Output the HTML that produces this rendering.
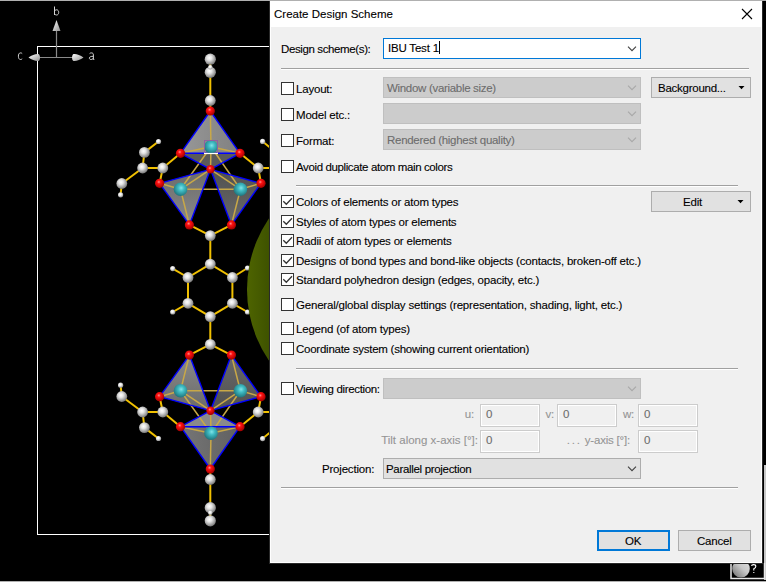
<!DOCTYPE html>
<html><head><meta charset="utf-8">
<style>
*{margin:0;padding:0;box-sizing:border-box}
html,body{width:766px;height:582px;overflow:hidden;background:#000}
body{position:relative;font-family:"Liberation Sans",sans-serif;font-size:11.5px;letter-spacing:-0.2px;color:#000;-webkit-text-stroke:0.1px currentColor}
.a{position:absolute}
.t{position:absolute;white-space:nowrap;line-height:14px;height:14px}
.dis{color:#6d6d6d}
.lab{color:#959595}
.cb{position:absolute;width:13px;height:13px;border:1px solid #333;background:#fff}
.sep{position:absolute;height:2px;border-top:1px solid #a0a0a0;border-bottom:1px solid #fff}
.combo{position:absolute;width:258px;height:21px;background:#ccc;border:1px solid #bfbfbf}
.btn{position:absolute;background:#e1e1e1;border:1px solid #adadad}
.fld{position:absolute;width:60px;height:23px;border:1px solid #ccc;background:#f0f0f0;box-shadow:inset 0 0 0 1px #fff}
</style></head>
<body>
<div class="a" style="left:0;top:0;width:766px;height:1px;background:#b0b0b0"></div>
<div class="a" style="left:0;top:581px;width:766px;height:1px;background:#b0b0b0"></div>
<div class="a" style="left:764px;top:465px;width:2px;height:115px;background:#c8c8c8"></div>

<svg id="mol" class="a" style="left:0;top:0" width="270" height="582"><defs>
<radialGradient id="gC" cx="0.42" cy="0.38" r="0.62"><stop offset="0" stop-color="#ffffff"/><stop offset="0.35" stop-color="#e4e4e4"/><stop offset="1" stop-color="#7a7a7a"/></radialGradient>
<radialGradient id="gH" cx="0.42" cy="0.38" r="0.62"><stop offset="0" stop-color="#ffffff"/><stop offset="0.4" stop-color="#eeeeee"/><stop offset="1" stop-color="#909090"/></radialGradient>
<radialGradient id="gO" cx="0.42" cy="0.36" r="0.64"><stop offset="0" stop-color="#ff9090"/><stop offset="0.3" stop-color="#ff1010"/><stop offset="1" stop-color="#a00000"/></radialGradient>
<radialGradient id="gZ" cx="0.55" cy="0.4" r="0.62"><stop offset="0" stop-color="#80e4e8"/><stop offset="0.35" stop-color="#40bcc4"/><stop offset="1" stop-color="#1c7078"/></radialGradient>
<linearGradient id="gGreen" gradientUnits="userSpaceOnUse" x1="247" y1="0" x2="270" y2="0"><stop offset="0" stop-color="#4e6400"/><stop offset="1" stop-color="#3e5200"/></linearGradient>
<linearGradient id="fTop" x1="0" y1="0" x2="1" y2="0"><stop offset="0" stop-color="#989898"/><stop offset="1" stop-color="#808080"/></linearGradient>
<linearGradient id="fL" x1="0" y1="0" x2="0" y2="1"><stop offset="0" stop-color="#6a6a6a"/><stop offset="1" stop-color="#8a8a8a"/></linearGradient>
<linearGradient id="fR" x1="0" y1="0" x2="0" y2="1"><stop offset="0" stop-color="#505050"/><stop offset="1" stop-color="#6a6a6a"/></linearGradient>
<linearGradient id="gAx" x1="0" y1="0" x2="1" y2="1"><stop offset="0" stop-color="#ffffff"/><stop offset="1" stop-color="#909090"/></linearGradient>
<linearGradient id="fBot" x1="0" y1="0" x2="1" y2="0"><stop offset="0" stop-color="#767676"/><stop offset="1" stop-color="#606060"/></linearGradient>
<linearGradient id="fL2" x1="0" y1="1" x2="0" y2="0"><stop offset="0" stop-color="#6a6a6a"/><stop offset="1" stop-color="#8a8a8a"/></linearGradient>
<linearGradient id="fR2" x1="0" y1="1" x2="0" y2="0"><stop offset="0" stop-color="#505050"/><stop offset="1" stop-color="#6a6a6a"/></linearGradient>
</defs><g>
<rect x="37.5" y="46.5" width="240" height="488" fill="none" stroke="#fff" stroke-width="1"/>
<line x1="56.5" y1="30" x2="56.5" y2="57.5" stroke="#8a8a8a" stroke-width="1.2"/>
<line x1="29" y1="57.5" x2="83" y2="57.5" stroke="#8a8a8a" stroke-width="1.2"/>
<path d="M56.5 20L60.5 31L52.5 31Z" fill="url(#gAx)"/>
<path d="M83.5 57.5C80 55 76 53.5 73.5 54C71.5 55 71.5 60 73.5 61C76 61.5 80 60 83.5 57.5Z" fill="url(#gAx)"/>
<path d="M28.5 57.5C32 55 36 53.5 38.5 54C40.5 55 40.5 60 38.5 61C36 61.5 32 60 28.5 57.5Z" fill="url(#gAx)"/>
<path d="M54.5 6.5V15M54.5 11.3C55 10.2 55.8 9.8 56.6 9.8C57.9 9.8 58.7 10.9 58.7 12.4C58.7 13.9 57.9 15 56.6 15C55.8 15 55 14.6 54.5 13.6" fill="none" stroke="#d4d4d4" stroke-width="1"/>
<path d="M22.2 53.6C21.8 53.1 21.2 52.9 20.5 52.9C19 52.9 18.4 54.4 18.4 56.2C18.4 58 19 59.5 20.5 59.5C21.2 59.5 21.8 59.2 22.2 58.8" fill="none" stroke="#d4d4d4" stroke-width="1"/>
<path d="M89.6 53.6C90 53.1 90.7 52.9 91.4 52.9C92.8 52.9 93.4 53.6 93.4 54.9V59.5M93.4 56.3C91.2 56.3 89.4 56.6 89.4 58.1C89.4 59 90 59.5 91 59.5C92.1 59.5 93 58.9 93.4 58M93.4 59.5H94.3" fill="none" stroke="#d4d4d4" stroke-width="1"/>
</g><line x1="158.5" y1="141.5" x2="144.4" y2="152.4" stroke="#f0c000" stroke-width="2"/>
<line x1="144.4" y1="152.4" x2="142.6" y2="168.0" stroke="#f0c000" stroke-width="2"/>
<line x1="142.6" y1="168.0" x2="162.8" y2="168.0" stroke="#f0c000" stroke-width="2"/>
<line x1="142.6" y1="168.0" x2="121.8" y2="183.5" stroke="#f0c000" stroke-width="2"/>
<line x1="121.8" y1="183.5" x2="120.6" y2="194.8" stroke="#f0c000" stroke-width="2"/>
<line x1="162.8" y1="168.0" x2="180.5" y2="153.3" stroke="#f0c000" stroke-width="2"/>
<line x1="162.8" y1="168.0" x2="159.6" y2="183.3" stroke="#f0c000" stroke-width="2"/>
<line x1="258.2" y1="168.0" x2="240.0" y2="153.3" stroke="#f0c000" stroke-width="2"/>
<line x1="258.2" y1="168.0" x2="261.0" y2="183.3" stroke="#f0c000" stroke-width="2"/>
<line x1="210.3" y1="111.0" x2="210.3" y2="100.5" stroke="#f0c000" stroke-width="2"/>
<line x1="210.3" y1="100.5" x2="210.3" y2="72.3" stroke="#f0c000" stroke-width="2"/>
<line x1="210.3" y1="72.3" x2="210.3" y2="59.2" stroke="#f0c000" stroke-width="2"/>
<line x1="189.4" y1="224.9" x2="210.3" y2="235.6" stroke="#f0c000" stroke-width="2"/>
<line x1="231.4" y1="224.9" x2="210.3" y2="235.6" stroke="#f0c000" stroke-width="2"/>
<line x1="262.6" y1="141.4" x2="270.0" y2="147.5" stroke="#f0c000" stroke-width="2"/>
<line x1="258.2" y1="168.0" x2="270.0" y2="168.0" stroke="#f0c000" stroke-width="2"/>
<line x1="158.5" y1="438.5" x2="144.4" y2="427.6" stroke="#f0c000" stroke-width="2"/>
<line x1="144.4" y1="427.6" x2="142.6" y2="412.0" stroke="#f0c000" stroke-width="2"/>
<line x1="142.6" y1="412.0" x2="162.8" y2="412.0" stroke="#f0c000" stroke-width="2"/>
<line x1="142.6" y1="412.0" x2="121.8" y2="396.5" stroke="#f0c000" stroke-width="2"/>
<line x1="121.8" y1="396.5" x2="120.6" y2="385.2" stroke="#f0c000" stroke-width="2"/>
<line x1="162.8" y1="412.0" x2="180.5" y2="426.7" stroke="#f0c000" stroke-width="2"/>
<line x1="162.8" y1="412.0" x2="159.6" y2="396.7" stroke="#f0c000" stroke-width="2"/>
<line x1="258.2" y1="412.0" x2="240.0" y2="426.7" stroke="#f0c000" stroke-width="2"/>
<line x1="258.2" y1="412.0" x2="261.0" y2="396.7" stroke="#f0c000" stroke-width="2"/>
<line x1="210.3" y1="469.0" x2="210.3" y2="479.5" stroke="#f0c000" stroke-width="2"/>
<line x1="210.3" y1="479.5" x2="210.3" y2="507.7" stroke="#f0c000" stroke-width="2"/>
<line x1="210.3" y1="507.7" x2="210.3" y2="520.8" stroke="#f0c000" stroke-width="2"/>
<line x1="189.4" y1="355.1" x2="210.3" y2="344.4" stroke="#f0c000" stroke-width="2"/>
<line x1="231.4" y1="355.1" x2="210.3" y2="344.4" stroke="#f0c000" stroke-width="2"/>
<line x1="262.6" y1="438.6" x2="270.0" y2="432.5" stroke="#f0c000" stroke-width="2"/>
<line x1="258.2" y1="412.0" x2="270.0" y2="412.0" stroke="#f0c000" stroke-width="2"/>
<line x1="210.3" y1="264.1" x2="188.0" y2="277.5" stroke="#f0c000" stroke-width="2"/>
<line x1="210.3" y1="264.1" x2="232.4" y2="277.5" stroke="#f0c000" stroke-width="2"/>
<line x1="188.0" y1="277.5" x2="188.0" y2="303.3" stroke="#f0c000" stroke-width="2"/>
<line x1="232.4" y1="277.5" x2="232.4" y2="303.3" stroke="#f0c000" stroke-width="2"/>
<line x1="188.0" y1="303.3" x2="210.3" y2="316.6" stroke="#f0c000" stroke-width="2"/>
<line x1="232.4" y1="303.3" x2="210.3" y2="316.6" stroke="#f0c000" stroke-width="2"/>
<line x1="188.0" y1="277.5" x2="172.7" y2="268.6" stroke="#f0c000" stroke-width="2"/>
<line x1="232.4" y1="277.5" x2="247.5" y2="268.0" stroke="#f0c000" stroke-width="2"/>
<line x1="188.0" y1="303.3" x2="172.7" y2="312.0" stroke="#f0c000" stroke-width="2"/>
<line x1="232.4" y1="303.3" x2="247.5" y2="312.0" stroke="#f0c000" stroke-width="2"/>
<line x1="210.3" y1="264.1" x2="210.3" y2="235.6" stroke="#f0c000" stroke-width="2"/>
<line x1="210.3" y1="316.6" x2="210.3" y2="344.4" stroke="#f0c000" stroke-width="2"/>
<polygon points="210.3,111.0 180.5,153.3 240.0,153.3" fill="url(#fTop)"/>
<polygon points="180.5,153.3 240.0,153.3 210.5,169.3" fill="#5a5a5a"/>
<polygon points="159.6,183.3 210.5,169.3 189.4,224.9" fill="url(#fL)"/>
<polygon points="261.0,183.3 210.5,169.3 231.4,224.9" fill="url(#fR)"/>
<line x1="211.0" y1="146.8" x2="210.3" y2="111.0" stroke="#c8a848" stroke-width="1.5"/>
<line x1="211.0" y1="146.8" x2="180.5" y2="153.3" stroke="#c8a848" stroke-width="1.5"/>
<line x1="211.0" y1="146.8" x2="240.0" y2="153.3" stroke="#c8a848" stroke-width="1.5"/>
<line x1="211.0" y1="146.8" x2="210.5" y2="169.3" stroke="#c8a848" stroke-width="1.5"/>
<line x1="211.0" y1="146.8" x2="180.5" y2="189.3" stroke="#c8a848" stroke-width="1.5"/>
<line x1="211.0" y1="146.8" x2="240.4" y2="189.3" stroke="#c8a848" stroke-width="1.5"/>
<line x1="210.5" y1="169.3" x2="180.5" y2="189.3" stroke="#c8a848" stroke-width="1.5"/>
<line x1="210.5" y1="169.3" x2="240.4" y2="189.3" stroke="#c8a848" stroke-width="1.5"/>
<line x1="180.5" y1="189.3" x2="240.4" y2="189.3" stroke="#c8a848" stroke-width="1.5"/>
<line x1="180.5" y1="189.3" x2="159.6" y2="183.3" stroke="#c8a848" stroke-width="1.5"/>
<line x1="180.5" y1="189.3" x2="189.4" y2="224.9" stroke="#c8a848" stroke-width="1.5"/>
<line x1="240.4" y1="189.3" x2="261.0" y2="183.3" stroke="#c8a848" stroke-width="1.5"/>
<line x1="240.4" y1="189.3" x2="231.4" y2="224.9" stroke="#c8a848" stroke-width="1.5"/>
<line x1="210.3" y1="111.0" x2="180.5" y2="153.3" stroke="#0000ff" stroke-width="1.4"/>
<line x1="210.3" y1="111.0" x2="240.0" y2="153.3" stroke="#0000ff" stroke-width="1.4"/>
<line x1="180.5" y1="153.3" x2="240.0" y2="153.3" stroke="#0000ff" stroke-width="1.4"/>
<line x1="180.5" y1="153.3" x2="210.5" y2="169.3" stroke="#0000ff" stroke-width="1.4"/>
<line x1="240.0" y1="153.3" x2="210.5" y2="169.3" stroke="#0000ff" stroke-width="1.4"/>
<line x1="210.5" y1="169.3" x2="159.6" y2="183.3" stroke="#0000ff" stroke-width="1.4"/>
<line x1="210.5" y1="169.3" x2="261.0" y2="183.3" stroke="#0000ff" stroke-width="1.4"/>
<line x1="210.5" y1="169.3" x2="189.4" y2="224.9" stroke="#0000ff" stroke-width="1.4"/>
<line x1="210.5" y1="169.3" x2="231.4" y2="224.9" stroke="#0000ff" stroke-width="1.4"/>
<line x1="159.6" y1="183.3" x2="189.4" y2="224.9" stroke="#0000ff" stroke-width="1.4"/>
<line x1="261.0" y1="183.3" x2="231.4" y2="224.9" stroke="#0000ff" stroke-width="1.4"/>
<polygon points="210.3,469.0 180.5,426.7 240.0,426.7" fill="url(#fBot)"/>
<polygon points="180.5,426.7 240.0,426.7 210.5,410.7" fill="#8a8a8a"/>
<polygon points="159.6,396.7 210.5,410.7 189.4,355.1" fill="url(#fL2)"/>
<polygon points="261.0,396.7 210.5,410.7 231.4,355.1" fill="url(#fR2)"/>
<line x1="211.0" y1="433.2" x2="210.3" y2="469.0" stroke="#c8a848" stroke-width="1.5"/>
<line x1="211.0" y1="433.2" x2="180.5" y2="426.7" stroke="#c8a848" stroke-width="1.5"/>
<line x1="211.0" y1="433.2" x2="240.0" y2="426.7" stroke="#c8a848" stroke-width="1.5"/>
<line x1="211.0" y1="433.2" x2="210.5" y2="410.7" stroke="#c8a848" stroke-width="1.5"/>
<line x1="211.0" y1="433.2" x2="180.5" y2="390.7" stroke="#c8a848" stroke-width="1.5"/>
<line x1="211.0" y1="433.2" x2="240.4" y2="390.7" stroke="#c8a848" stroke-width="1.5"/>
<line x1="210.5" y1="410.7" x2="180.5" y2="390.7" stroke="#c8a848" stroke-width="1.5"/>
<line x1="210.5" y1="410.7" x2="240.4" y2="390.7" stroke="#c8a848" stroke-width="1.5"/>
<line x1="180.5" y1="390.7" x2="240.4" y2="390.7" stroke="#c8a848" stroke-width="1.5"/>
<line x1="180.5" y1="390.7" x2="159.6" y2="396.7" stroke="#c8a848" stroke-width="1.5"/>
<line x1="180.5" y1="390.7" x2="189.4" y2="355.1" stroke="#c8a848" stroke-width="1.5"/>
<line x1="240.4" y1="390.7" x2="261.0" y2="396.7" stroke="#c8a848" stroke-width="1.5"/>
<line x1="240.4" y1="390.7" x2="231.4" y2="355.1" stroke="#c8a848" stroke-width="1.5"/>
<line x1="210.3" y1="469.0" x2="180.5" y2="426.7" stroke="#0000ff" stroke-width="1.4"/>
<line x1="210.3" y1="469.0" x2="240.0" y2="426.7" stroke="#0000ff" stroke-width="1.4"/>
<line x1="180.5" y1="426.7" x2="240.0" y2="426.7" stroke="#0000ff" stroke-width="1.4"/>
<line x1="180.5" y1="426.7" x2="210.5" y2="410.7" stroke="#0000ff" stroke-width="1.4"/>
<line x1="240.0" y1="426.7" x2="210.5" y2="410.7" stroke="#0000ff" stroke-width="1.4"/>
<line x1="210.5" y1="410.7" x2="159.6" y2="396.7" stroke="#0000ff" stroke-width="1.4"/>
<line x1="210.5" y1="410.7" x2="261.0" y2="396.7" stroke="#0000ff" stroke-width="1.4"/>
<line x1="210.5" y1="410.7" x2="189.4" y2="355.1" stroke="#0000ff" stroke-width="1.4"/>
<line x1="210.5" y1="410.7" x2="231.4" y2="355.1" stroke="#0000ff" stroke-width="1.4"/>
<line x1="159.6" y1="396.7" x2="189.4" y2="355.1" stroke="#0000ff" stroke-width="1.4"/>
<line x1="261.0" y1="396.7" x2="231.4" y2="355.1" stroke="#0000ff" stroke-width="1.4"/>
<circle cx="210.3" cy="111.0" r="4.6" fill="url(#gO)"/>
<circle cx="210.3" cy="469.0" r="4.6" fill="url(#gO)"/>
<circle cx="180.5" cy="153.3" r="4.6" fill="url(#gO)"/>
<circle cx="180.5" cy="426.7" r="4.6" fill="url(#gO)"/>
<circle cx="240.0" cy="153.3" r="4.6" fill="url(#gO)"/>
<circle cx="240.0" cy="426.7" r="4.6" fill="url(#gO)"/>
<circle cx="210.5" cy="169.3" r="4.2" fill="url(#gO)"/>
<circle cx="210.5" cy="410.7" r="4.2" fill="url(#gO)"/>
<circle cx="159.6" cy="183.3" r="4.6" fill="url(#gO)"/>
<circle cx="159.6" cy="396.7" r="4.6" fill="url(#gO)"/>
<circle cx="261.0" cy="183.3" r="4.6" fill="url(#gO)"/>
<circle cx="261.0" cy="396.7" r="4.6" fill="url(#gO)"/>
<circle cx="189.4" cy="224.9" r="4.6" fill="url(#gO)"/>
<circle cx="189.4" cy="355.1" r="4.6" fill="url(#gO)"/>
<circle cx="231.4" cy="224.9" r="4.6" fill="url(#gO)"/>
<circle cx="231.4" cy="355.1" r="4.6" fill="url(#gO)"/>
<circle cx="211.0" cy="146.8" r="6.8" fill="url(#gZ)"/>
<circle cx="211.0" cy="433.2" r="6.8" fill="url(#gZ)"/>
<circle cx="180.5" cy="189.3" r="6.8" fill="url(#gZ)"/>
<circle cx="180.5" cy="390.7" r="6.8" fill="url(#gZ)"/>
<circle cx="240.4" cy="189.3" r="6.8" fill="url(#gZ)"/>
<circle cx="240.4" cy="390.7" r="6.8" fill="url(#gZ)"/>
<circle cx="162.8" cy="168.0" r="5.4" fill="url(#gC)"/>
<circle cx="162.8" cy="412.0" r="5.4" fill="url(#gC)"/>
<circle cx="144.4" cy="152.4" r="5.4" fill="url(#gC)"/>
<circle cx="144.4" cy="427.6" r="5.4" fill="url(#gC)"/>
<circle cx="142.6" cy="168.0" r="5.4" fill="url(#gC)"/>
<circle cx="142.6" cy="412.0" r="5.4" fill="url(#gC)"/>
<circle cx="121.8" cy="183.5" r="5.4" fill="url(#gC)"/>
<circle cx="121.8" cy="396.5" r="5.4" fill="url(#gC)"/>
<circle cx="158.5" cy="141.5" r="2.6" fill="url(#gH)"/>
<circle cx="158.5" cy="438.5" r="2.6" fill="url(#gH)"/>
<circle cx="120.6" cy="194.8" r="2.6" fill="url(#gH)"/>
<circle cx="120.6" cy="385.2" r="2.6" fill="url(#gH)"/>
<circle cx="258.2" cy="168.0" r="5.4" fill="url(#gC)"/>
<circle cx="258.2" cy="412.0" r="5.4" fill="url(#gC)"/>
<circle cx="262.6" cy="141.4" r="2.6" fill="url(#gH)"/>
<circle cx="262.6" cy="438.6" r="2.6" fill="url(#gH)"/>
<circle cx="210.3" cy="100.5" r="5.4" fill="url(#gC)"/>
<circle cx="210.3" cy="479.5" r="5.4" fill="url(#gC)"/>
<circle cx="210.3" cy="72.3" r="5.6" fill="url(#gC)"/>
<circle cx="210.3" cy="507.7" r="5.6" fill="url(#gC)"/>
<circle cx="210.3" cy="59.2" r="5.6" fill="url(#gC)"/>
<circle cx="210.3" cy="520.8" r="5.6" fill="url(#gC)"/>
<circle cx="210.3" cy="67.2" r="2.3" fill="url(#gH)"/>
<circle cx="210.3" cy="512.8" r="2.3" fill="url(#gH)"/>
<circle cx="210.3" cy="235.6" r="5.4" fill="url(#gC)"/>
<circle cx="210.3" cy="344.4" r="5.4" fill="url(#gC)"/>
<circle cx="210.3" cy="264.1" r="5.4" fill="url(#gC)"/>
<circle cx="188.0" cy="277.5" r="5.4" fill="url(#gC)"/>
<circle cx="232.4" cy="277.5" r="5.4" fill="url(#gC)"/>
<circle cx="188.0" cy="303.3" r="5.4" fill="url(#gC)"/>
<circle cx="232.4" cy="303.3" r="5.4" fill="url(#gC)"/>
<circle cx="210.3" cy="316.6" r="5.4" fill="url(#gC)"/>
<circle cx="172.7" cy="268.6" r="2.6" fill="url(#gH)"/>
<circle cx="247.5" cy="268.0" r="2.6" fill="url(#gH)"/>
<circle cx="172.7" cy="312.0" r="2.6" fill="url(#gH)"/>
<circle cx="247.5" cy="312.0" r="2.6" fill="url(#gH)"/>
<circle cx="373" cy="289.5" r="126" fill="url(#gGreen)"/>
<rect x="204.5" y="140.5" width="13" height="13" fill="none" stroke="#9060a0" stroke-width="1"/><line x1="204" y1="153.5" x2="218" y2="153.5" stroke="#fff" stroke-width="1.2"/>
</svg>

<svg class="a" style="left:726px;top:556px" width="40" height="26">
<defs><linearGradient id="gSph" x1="1" y1="0" x2="0" y2="1"><stop offset="0" stop-color="#e0e0e0"/><stop offset="0.45" stop-color="#c8c8c8"/><stop offset="1" stop-color="#6a6a6a"/></linearGradient></defs>
<rect x="4" y="0" width="34" height="23.5" fill="#000"/>
<path d="M5 7V22.5H38.5V7" fill="none" stroke="#e8e8e8" stroke-width="1.5"/>
<clipPath id="cpS"><rect x="0" y="7" width="40" height="19"/></clipPath>
<circle cx="15" cy="12.7" r="8.8" fill="url(#gSph)" clip-path="url(#cpS)"/>
<path d="M25.6 10Q25.6 8.6 27.6 8.6Q29.8 8.6 29.8 10.4Q29.8 11.8 27.8 12.8V14.6M27.8 16V17" fill="none" stroke="#fff" stroke-width="1.1"/>
</svg>
<!-- dialog -->
<div class="a" style="left:269px;top:1px;width:494px;height:563px;background:#2a2a2a"></div>
<div class="a" style="left:270px;top:1px;width:492px;height:562px;background:#fff"></div>
<div class="a" style="left:271px;top:27px;width:490px;height:535px;background:#f0f0f0"></div>
<div class="t" style="left:274px;top:7px;letter-spacing:0">Create Design Scheme</div>
<svg class="a" style="left:741px;top:8px" width="12" height="12"><path d="M1 1L11 11M11 1L1 11" stroke="#000" stroke-width="1.1"/></svg>

<div class="t" style="left:281px;top:42px;letter-spacing:-0.38px">Design scheme(s):</div>
<div class="a" style="left:383px;top:38px;width:258px;height:21px;border:1px solid #0078d7;background:#fff"></div>
<div class="t" style="left:388px;top:41px">IBU Test 1</div>
<div class="a" style="left:439px;top:41px;width:1px;height:13px;background:#000"></div>
<svg class="a" style="left:627px;top:45px" width="10" height="7"><path d="M1 1.6L5 5.6L9 1.6" stroke="#404040" stroke-width="1.1" fill="none"/></svg>

<div class="sep" style="left:281px;top:68px;width:469px;border-top-width:1px;clip-path:inset(0 1px 0 0)"></div>

<div class="cb" style="left:281px;top:82px"></div><div class="t" style="left:296px;top:82px">Layout:</div>
<div class="combo" style="left:383px;top:77px"></div><div class="t dis" style="left:387px;top:81px;letter-spacing:-0.31px">Window (variable size)</div>
<svg class="a" style="left:627px;top:84px" width="10" height="7"><path d="M1 1.6L5 5.6L9 1.6" stroke="#a8a8a8" stroke-width="1.1" fill="none"/></svg>
<div class="btn" style="left:651px;top:77px;width:100px;height:21px"></div><div class="t" style="left:658px;top:81px;letter-spacing:-0.25px">Background...</div>
<svg class="a" style="left:738px;top:86px" width="7" height="4"><path d="M0.5 0H6.5L3.5 3.2Z" fill="#000"/></svg>

<div class="cb" style="left:281px;top:108px"></div><div class="t" style="left:296px;top:108px">Model etc.:</div>
<div class="combo" style="left:383px;top:103px"></div>
<svg class="a" style="left:627px;top:110px" width="10" height="7"><path d="M1 1.6L5 5.6L9 1.6" stroke="#a8a8a8" stroke-width="1.1" fill="none"/></svg>

<div class="cb" style="left:281px;top:134px"></div><div class="t" style="left:296px;top:134px">Format:</div>
<div class="combo" style="left:383px;top:129px"></div><div class="t dis" style="left:387px;top:133px;letter-spacing:-0.28px">Rendered (highest quality)</div>
<svg class="a" style="left:627px;top:136px" width="10" height="7"><path d="M1 1.6L5 5.6L9 1.6" stroke="#a8a8a8" stroke-width="1.1" fill="none"/></svg>

<div class="cb" style="left:281px;top:160px"></div><div class="t" style="left:296px;top:160px;letter-spacing:-0.38px">Avoid duplicate atom main colors</div>

<div class="sep" style="left:296px;top:185px;width:442px"></div>

<div class="cb" style="left:281px;top:195px"></div><svg class="a" style="left:281px;top:195px" width="13" height="13"><path d="M2.3 6.3L5.3 9.3L11 3.3" stroke="#333" stroke-width="1.3" fill="none"/></svg><div class="t" style="left:296px;top:195px">Colors of elements or atom types</div>
<div class="btn" style="left:651px;top:191px;width:100px;height:21px"></div><div class="t" style="left:683px;top:195px">Edit</div>
<svg class="a" style="left:737px;top:200px" width="7" height="4"><path d="M0.5 0H6.5L3.5 3.2Z" fill="#000"/></svg>
<div class="cb" style="left:281px;top:215px"></div><svg class="a" style="left:281px;top:215px" width="13" height="13"><path d="M2.3 6.3L5.3 9.3L11 3.3" stroke="#333" stroke-width="1.3" fill="none"/></svg><div class="t" style="left:296px;top:215px">Styles of atom types or elements</div>
<div class="cb" style="left:281px;top:234px"></div><svg class="a" style="left:281px;top:234px" width="13" height="13"><path d="M2.3 6.3L5.3 9.3L11 3.3" stroke="#333" stroke-width="1.3" fill="none"/></svg><div class="t" style="left:296px;top:234px">Radii of atom types or elements</div>
<div class="cb" style="left:281px;top:254px"></div><svg class="a" style="left:281px;top:254px" width="13" height="13"><path d="M2.3 6.3L5.3 9.3L11 3.3" stroke="#333" stroke-width="1.3" fill="none"/></svg><div class="t" style="left:296px;top:254px">Designs of bond types and bond-like objects (contacts, broken-off etc.)</div>
<div class="cb" style="left:281px;top:273px"></div><svg class="a" style="left:281px;top:273px" width="13" height="13"><path d="M2.3 6.3L5.3 9.3L11 3.3" stroke="#333" stroke-width="1.3" fill="none"/></svg><div class="t" style="left:296px;top:273px">Standard polyhedron design (edges, opacity, etc.)</div>
<div class="cb" style="left:281px;top:298px"></div><div class="t" style="left:296px;top:298px">General/global display settings (representation, shading, light, etc.)</div>
<div class="cb" style="left:281px;top:322px"></div><div class="t" style="left:296px;top:322px">Legend (of atom types)</div>
<div class="cb" style="left:281px;top:342px"></div><div class="t" style="left:296px;top:342px;letter-spacing:-0.25px">Coordinate system (showing current orientation)</div>

<div class="sep" style="left:296px;top:368px;width:442px"></div>

<div class="cb" style="left:281px;top:382px"></div><div class="t" style="left:296px;top:382px;letter-spacing:-0.35px">Viewing direction:</div>
<div class="combo" style="left:383px;top:378px"></div>
<svg class="a" style="left:627px;top:385px" width="10" height="7"><path d="M1 1.6L5 5.6L9 1.6" stroke="#a8a8a8" stroke-width="1.1" fill="none"/></svg>

<div class="t lab" style="right:292px;top:407px">u:</div>
<div class="fld" style="left:480px;top:404px"></div><div class="t dis" style="left:486px;top:407px">0</div>
<div class="t lab" style="right:212px;top:407px">v:</div>
<div class="fld" style="left:557px;top:404px"></div><div class="t dis" style="left:563px;top:407px">0</div>
<div class="t lab" style="right:132px;top:407px">w:</div>
<div class="fld" style="left:638px;top:404px"></div><div class="t dis" style="left:644px;top:407px">0</div>

<div class="t lab" style="right:288px;top:433px;letter-spacing:0px">Tilt along x-axis [°]:</div>
<div class="fld" style="left:480px;top:430px"></div><div class="t dis" style="left:486px;top:433px">0</div>
<div class="t lab" style="right:136px;top:433px"><span style="letter-spacing:1.8px">...</span> y-axis [°]:</div>
<div class="fld" style="left:638px;top:430px"></div><div class="t dis" style="left:644px;top:433px">0</div>

<div class="t" style="left:322px;top:462px">Projection:</div>
<div class="btn" style="left:383px;top:458px;width:258px;height:21px"></div><div class="t" style="left:386px;top:462px;letter-spacing:-0.32px">Parallel projection</div>
<svg class="a" style="left:627px;top:465px" width="10" height="7"><path d="M1 1.6L5 5.6L9 1.6" stroke="#404040" stroke-width="1.1" fill="none"/></svg>

<div class="sep" style="left:281px;top:487px;width:457px"></div>

<div class="btn" style="left:597px;top:530px;width:73px;height:21px;border:2px solid #0078d7"></div><div class="t" style="left:625px;top:534px">OK</div>
<div class="btn" style="left:678px;top:530px;width:73px;height:21px"></div><div class="t" style="left:697px;top:534px">Cancel</div>

</body></html>
